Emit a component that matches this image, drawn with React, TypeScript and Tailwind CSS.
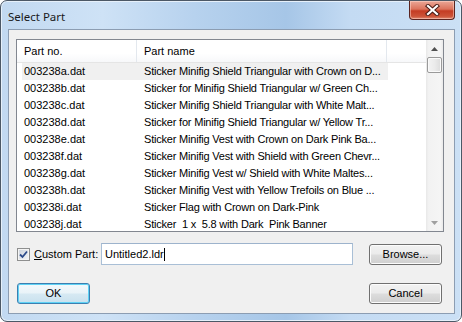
import React from "react";

const rows: [string, string][] = [
	["003238a.dat", "Sticker Minifig Shield Triangular with Crown on D..."],
	["003238b.dat", "Sticker for Minifig Shield Triangular w/ Green Ch..."],
	["003238c.dat", "Sticker Minifig Shield Triangular with White Malt..."],
	["003238d.dat", "Sticker for Minifig Shield Triangular w/ Yellow Tr..."],
	["003238e.dat", "Sticker Minifig Vest with Crown on Dark Pink Ba..."],
	["003238f.dat", "Sticker Minifig Vest with Shield with Green Chevr..."],
	["003238g.dat", "Sticker Minifig Vest w/ Shield with White Maltes..."],
	["003238h.dat", "Sticker Minifig Vest with Yellow Trefoils on Blue ..."],
	["003238i.dat", "Sticker Flag with Crown on Dark-Pink"],
	["003238j.dat", "Sticker  1 x  5.8 with Dark  Pink Banner"],
];

function WinButton({ label, primary }: { label: string; primary?: boolean }) {
	return (
		<div
			className={
				"w-[73px] h-[21px] rounded-[3px] border flex items-center justify-center " +
				(primary
					? "border-[#3c7fb1] shadow-[inset_0_0_0_1px_#5fd2f5] bg-[linear-gradient(180deg,#f3f9fc_0%,#e9f3f8_48%,#d6e9f3_52%,#c9e1ee_100%)]"
					: "border-[#707070] shadow-[inset_0_0_0_1px_#fcfcfc] bg-[linear-gradient(180deg,#f2f2f2_0%,#ebebeb_48%,#dddddd_52%,#cfcfcf_100%)]")
			}
		>
			{label}
		</div>
	);
}

export default function App() {
	return (
		<div className="w-[462px] h-[322px] font-['Liberation_Sans',Arial,sans-serif] text-[11px] text-black">
			<div className="w-full h-full rounded-[7px] border border-[#4c5866] shadow-[inset_0_0_0_1px_#e6f0fa] bg-[linear-gradient(90deg,#c2d9f1_0%,#cee2f6_22%,#b7d2ee_42%,#a6c6e7_62%,#c4dbf3_76%,#cbe0f5_100%)] flex flex-col">
				{/* title bar */}
				<div className="h-[28px] flex items-start justify-between pl-[7px] pr-[6px]">
					<span className="pt-[7px] text-[11.5px] font-['Noto_Sans',sans-serif] text-[#1a1a1a]">Select Part</span>
					<div className="w-[46px] h-[19px] rounded-b-[4px] border border-t-0 border-[#5a2420] bg-[linear-gradient(180deg,#eba797_0%,#dc735c_45%,#c43c24_55%,#cc5338_85%,#e08a72_100%)] shadow-[inset_0_0_0_1px_rgba(255,220,210,0.5)] flex items-center justify-center">
						<svg width="15" height="12" viewBox="0 0 15 12">
							<path d="M3 2 L12 10 M12 2 L3 10" stroke="#4a1c16" strokeWidth="4.2" strokeLinecap="square" />
							<path d="M3 2 L12 10 M12 2 L3 10" stroke="#ffffff" strokeWidth="2.2" strokeLinecap="square" />
						</svg>
					</div>
				</div>

				{/* client area */}
				<div className="flex-1 ml-[7px] mr-[6px] mb-[7px] border border-[#8c9db2] bg-[#f0f0f0] pl-[7px] pt-[9px] flex flex-col">
					{/* list view */}
					<div className="w-[428px] h-[193px] border border-[#828790] bg-white flex overflow-hidden">
						<div className="w-[409px] flex flex-col">
							<div className="h-[23px] flex border-b border-[#e5e5e5] bg-[linear-gradient(180deg,#ffffff_0%,#ffffff_60%,#f7f8fa_100%)]">
								<div className="w-[120px] pl-[7px] flex items-center border-r border-[#e3e8ee]">Part no.</div>
								<div className="w-[250px] pl-[7px] flex items-center border-r border-[#e3e8ee]">Part name</div>
								<div className="flex-1"></div>
							</div>
							<div className="flex flex-col overflow-hidden">
								{rows.map(([no, name], i) => (
									<div
										key={no}
										className={
											"ml-[5px] w-[366px] h-[17px] shrink-0 flex items-center whitespace-pre " +
											(i === 0 ? "bg-[#f0f0f0]" : "")
										}
									>
										<div className="w-[115px] pl-[2px]">{no}</div>
										<div className="flex-1 pl-[7px] overflow-hidden tracking-[-0.2px]">{name}</div>
									</div>
								))}
							</div>
						</div>
						{/* scrollbar */}
						<div className="w-[17px] flex flex-col bg-[linear-gradient(90deg,#e8e8e8_0%,#f2f2f2_15%,#f5f5f5_85%,#eaeaea_100%)]">
							<div className="h-[17px] flex items-center justify-center">
								<svg width="7" height="4" viewBox="0 0 7 4">
									<path d="M3.5 0 L7 4 L0 4 Z" fill="#505050" />
								</svg>
							</div>
							<div className="mx-[1px] h-[16px] rounded-[2px] border border-[#9a9a9a] bg-[linear-gradient(90deg,#f3f3f3_0%,#ebebeb_50%,#dcdcdc_100%)] shadow-[inset_0_0_0_1px_#fafafa]"></div>
							<div className="flex-1"></div>
							<div className="h-[17px] flex items-center justify-center">
								<svg width="7" height="4" viewBox="0 0 7 4">
									<path d="M0 0 L7 0 L3.5 4 Z" fill="#a0a0a0" />
								</svg>
							</div>
						</div>
					</div>

					{/* custom part row */}
					<div className="mt-[11px] flex items-center">
						<div className="w-[85px] pl-[1px] flex items-center">
							<div className="w-[13px] h-[13px] border border-[#8e8f8f] bg-[linear-gradient(135deg,#cbd2dc_0%,#f4f6f8_100%)] shadow-[inset_0_0_0_1px_#f4f4f4] flex items-center justify-center">
								<svg width="9" height="9" viewBox="0 0 9 9">
									<path d="M1 4.5 L3.5 7 L8 1.5" stroke="#2b4a8a" strokeWidth="1.8" fill="none" />
								</svg>
							</div>
							<span className="ml-[4px]">
								<span className="underline">C</span>ustom Part:
							</span>
						</div>
						<div className="w-[252px] h-[22px] border border-[#a9bfd6] border-t-[#9db3cc] bg-white pl-[3px] flex items-center">
							<span>Untitled2.ldr</span>
							<span className="w-[1px] h-[13px] bg-black"></span>
						</div>
						<div className="ml-[16px]">
							<WinButton label="Browse..." />
						</div>
					</div>

					{/* buttons */}
					<div className="mt-[18px] flex items-center pl-[1px]">
						<WinButton label="OK" primary />
						<div className="ml-[279px]">
							<WinButton label="Cancel" />
						</div>
					</div>
				</div>
			</div>
		</div>
	);
}
